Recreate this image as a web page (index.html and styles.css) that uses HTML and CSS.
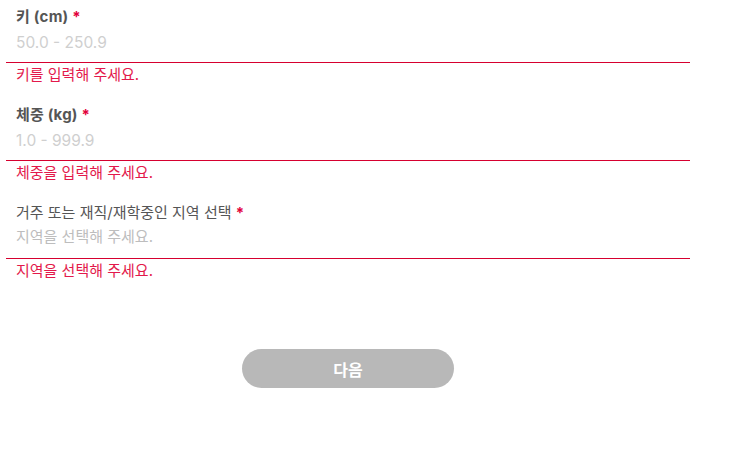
FILE: index.html
```html
<!DOCTYPE html>
<html lang="ko">
<head>
<meta charset="utf-8">
<link rel="stylesheet" href="styles.css">
</head>
<body>
<div class="form">
  <div class="field">
    <div class="label bold">키 (cm) <span class="req">*</span></div>
    <div class="input num">50.0 - 250.9</div>
    <div class="error">키를 입력해 주세요.</div>
  </div>
  <div class="field">
    <div class="label bold">체중 (kg) <span class="req">*</span></div>
    <div class="input num">1.0 - 999.9</div>
    <div class="error">체중을 입력해 주세요.</div>
  </div>
  <div class="field">
    <div class="label">거주 또는 재직/재학중인 지역 선택 <span class="req">*</span></div>
    <div class="input sel">지역을 선택해 주세요.</div>
    <div class="error">지역을 선택해 주세요.</div>
  </div>
  <div class="actions">
    <button class="next">다음</button>
  </div>
</div>
</body>
</html>
```
FILE: styles.css
```css
* { box-sizing: border-box; }
body {
  margin: 0;
  background: #fff;
  font-family: "Inter", "Noto Sans CJK KR", sans-serif;
}
.form {
  width: 684px;
  margin-left: 6px;
}
.field {
  height: 98px;
  padding-top: 6px;
}
.label {
  height: 21px;
  line-height: 21px;
  padding-left: 10px;
  font-size: 15px;
  color: #555;
}
.label.bold { font-weight: 700; letter-spacing: 0.2px; }
.req { color: #e2003b; font-weight: 700; }
.input {
  height: 36px;
  padding: 6px 0 0 10px;
  line-height: 20px;
  border-bottom: 1px solid #d6002f;
}
.input.num { font-size: 15.5px; color: #cfcfcf; }
.input.sel { font-size: 15px; color: #bdbdbd; padding-top: 4px; }
.error {
  margin-top: 2px;
  line-height: 20px;
  padding-left: 10px;
  font-size: 15px;
  color: #e3194b;
}
.actions {
  display: flex;
  justify-content: center;
  margin-top: 55px;
}
.next {
  width: 212px;
  height: 39px;
  border: 0;
  border-radius: 20px;
  background: #b8b8b8;
  color: #fff;
  font-family: "Inter", "Noto Sans CJK KR", sans-serif;
  font-size: 16px;
  font-weight: 700;
}
```
